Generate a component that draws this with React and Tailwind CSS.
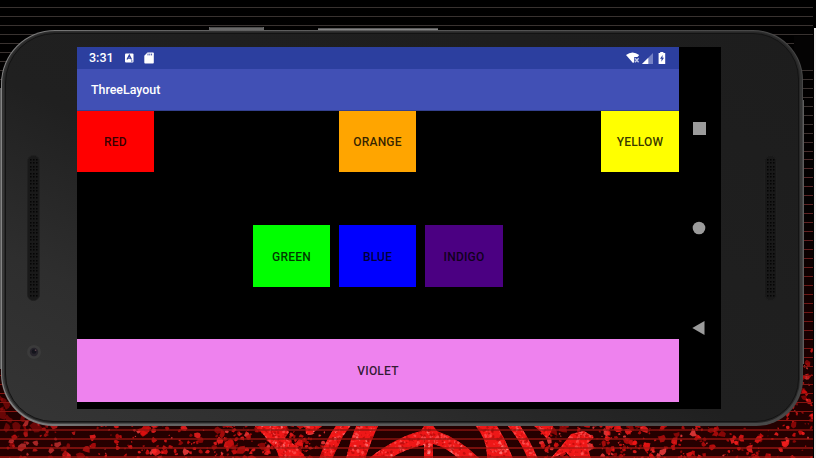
import React from "react";

// Small seeded generator so the wallpaper is the same on every load
function makeRandom(seed) {
  let s = seed;
  return () => {
    s = (s * 16807) % 2147483647;
    return s / 2147483647;
  };
}

const reds = ["#ff2020", "#e01010", "#c00c0c", "#f51818", "#9e0808", "#ff4040"];

function blob(x, y, r, rnd) {
  const pts = [];
  for (let i = 0; i < 7; i++) {
    const a = (i / 7) * Math.PI * 2;
    const d = r * (0.5 + rnd() * 0.8);
    pts.push(`${(x + Math.cos(a) * d).toFixed(1)},${(y + Math.sin(a) * d).toFixed(1)}`);
  }
  return pts.join(" ");
}

const rnd = makeRandom(4217);
const specks = [];
for (let i = 0; i < 620; i++) {
  let x = rnd() * 814;
  if (x > 325 && x < 545) x = rnd() > 0.5 ? 215 + rnd() * 100 : 540 + rnd() * 110;
  const y = 422 + rnd() * 38;
  const r = 0.7 + rnd() * rnd() * 4.8;
  const c = reds[Math.floor(rnd() * reds.length)];
  specks.push({ p: blob(x, y, r, rnd), c, o: x < 90 ? 0.6 : 0.8 });
}
for (let i = 0; i < 24; i++) {
  const x = rnd() * 48;
  const y = 385 + rnd() * 45;
  specks.push({ p: blob(x, y, 2 + rnd() * 5, rnd), c: "#b00c0c", o: 0.5 });
}
for (let i = 0; i < 60; i++) {
  const x = 785 + rnd() * 28;
  const y = 350 + rnd() * 78;
  specks.push({ p: blob(x, y, 0.7 + rnd() * 2.6, rnd), c: reds[i % 6], o: 0.7 });
}
const grain = [];
for (let i = 0; i < 2000; i++) {
  const t = rnd();
  grain.push({
    p: blob(240 + rnd() * 355, 423 + rnd() * 36, 0.5 + rnd() * 1.4, rnd),
    c: t > 0.62 ? "#b00a0a" : t > 0.3 ? "#ff5555" : t > 0.24 ? "#ff9090" : "#ff1c1c",
  });
}
const lines = Array.from({ length: 51 }, (_, k) => 7 + k * 8.97);

function Wallpaper() {
  return (
    <svg className="absolute inset-0" width="816" height="458" viewBox="0 0 816 458" aria-hidden="true">
      <defs>
        <linearGradient id="bg" x1="0" y1="0" x2="0" y2="1">
          <stop offset="0" stopColor="#000" />
          <stop offset="0.45" stopColor="#030000" />
          <stop offset="0.8" stopColor="#1c0000" />
          <stop offset="1" stopColor="#280000" />
        </linearGradient>
        <linearGradient id="rule" gradientUnits="userSpaceOnUse" x1="0" y1="0" x2="0" y2="458">
          <stop offset="0" stopColor="#383230" />
          <stop offset="0.28" stopColor="#3b3230" />
          <stop offset="0.4" stopColor="#572526" />
          <stop offset="0.7" stopColor="#711411" />
          <stop offset="0.93" stopColor="#8c1410" />
          <stop offset="1" stopColor="#b01a14" />
        </linearGradient>
        <clipPath id="rings">
          <path d="M337 424H352L343 436 332 459H319Q324 443 337 424Z" />
          <path d="M357 424H379Q372 438 365 459H346Q350 440 357 424Z" />
          <path d="M368 459Q396 437 421 431L425 424H432L437 431Q460 439 480 459H459Q446 447 433 444V459H424V445Q404 449 390 459Z" />
          <path d="M474 424H496Q506 440 513 459H487Q488 439 474 424Z" />
          <path d="M506 424H519Q530 440 538 459H528Q519 438 506 424Z" />
          <path d="M532 424H554L551 432 547 439 541 432Z" />
          <path d="M550 459 560 448 571 434 584 431 594 437 587 444 591 459H572L566 452Z" />
          <path d="M253 424H281L289 432 285 438 296 446 307 459H280L276 449 270 443 263 434Z" />
          <path d="M305 424H325L314 432 306 434Z" />
        </clipPath>
      </defs>
      <rect width="816" height="458" fill="url(#bg)" />
      {specks.map((s, i) => <polygon key={i} points={s.p} fill={s.c} opacity={s.o} />)}
      <g clipPath="url(#rings)">
        <rect x="225" y="420" width="370" height="40" fill="#ee1717" />
        {grain.map((s, i) => <polygon key={i} points={s.p} fill={s.c} opacity="0.7" />)}
      </g>
      {lines.map((y) => (
        <rect key={y} x="0" y={Math.round(y)} width="813" height={y > 425 ? 2 : 1} fill="url(#rule)" opacity={y > 425 ? 0.65 : 1} />
      ))}
      <rect x="794" y="36" width="19" height="34" fill="#040303" />
      <rect x="813" y="28" width="1" height="430" fill="#000" />
      <rect x="814" y="28" width="2" height="430" fill="#f2f2f2" />
      <rect x="209" y="27" width="55" height="4" fill="#686868" />
      <rect x="210" y="27" width="53" height="1" fill="#4c4c4c" />
      <rect x="318" y="28" width="120" height="3" fill="#858585" />
      <rect x="318" y="28" width="120" height="1" fill="#5a5a5a" />
      <rect x="0" y="88" width="3" height="281" fill="#5e5e5e" />
      <rect x="803" y="100" width="1" height="264" fill="#5e5e5e" />
    </svg>
  );
}

function Speaker() {
  return (
    <svg width="13" height="146" viewBox="0 0 13 146" aria-hidden="true">
      <rect x="0.5" y="0.5" width="12" height="145" rx="6" fill="#191919" stroke="#202020" />
      {Array.from({ length: 40 }, (_, r) =>
        [3, 6, 9].map((x) => <rect key={`${r}-${x}`} x={x} y={Math.round(4 + r * 3.48)} width="1.5" height="1.5" fill="#050505" />)
      )}
    </svg>
  );
}

function StatusBar() {
  return (
    <div className="flex h-[22px] items-center bg-[#2c3f9f] pl-3 pr-[13px] text-white">
      <span className="w-[36px] pt-px text-[12.5px] leading-none font-medium">3:31</span>
      <svg width="9" height="10" viewBox="0 0 9 10">
        <rect y="0.5" width="8.5" height="9" rx="1" fill="#fff" />
        <path d="M2 6.5 4.3 2 6.5 6.5M3 5.2H5.6M6 8H7.5" stroke="#2c3f9f" strokeWidth="1.2" fill="none" />
      </svg>
      <svg className="ml-[10px]" width="10" height="12" viewBox="0 0 10 12">
        <path d="M3.5 0.5H9Q9.8 0.5 9.8 1.3V10.5Q9.8 11.4 9 11.4H1.2Q0.3 11.4 0.3 10.5V3.8Z" fill="#fff" />
        <path d="M4 1.6V3.4M5.8 1.6V3.4M7.6 1.6V3.4" stroke="#2c3f9f" strokeWidth="0.9" />
      </svg>
      <svg className="ml-auto" width="14" height="12" viewBox="0 0 14 12">
        <path d="M0 3Q6.5 -2 13.2 3L11.5 5H8.2V10.2L7 11Z" fill="#fff" />
        <path d="M9 6.2 12.6 10.2M12.6 6.2 9 10.2" stroke="#c3cae9" strokeWidth="1.3" />
      </svg>
      <svg className="ml-0.5" width="11" height="11" viewBox="0 0 11 11">
        <path d="M0 11 11 0V11Z" fill="#7582c5" />
        <path d="M0 11 6.3 4.7V11Z" fill="#fff" />
      </svg>
      <svg className="ml-[5px]" width="8" height="12" viewBox="0 0 8 12">
        <path d="M2.2 0H5.4V1.1H7.2V12H0.6V1.1H2.2Z" fill="#fff" />
        <path d="M4.7 3 2 6.8H3.6L3.3 9.8 6 5.8H4.4Z" fill="#2c3f9f" />
      </svg>
    </div>
  );
}

function Tile({ label, color }) {
  return (
    <div className={`flex items-center justify-center pt-px text-[12px] leading-none font-medium tracking-[0.2px] text-black/80 ${color}`}>
      {label}
    </div>
  );
}

function Screen() {
  return (
    <div className="flex h-[362px] w-[644px] bg-black">
      <div className="flex w-[602px] flex-col">
        <StatusBar />
        <div className="flex h-[42px] items-center border-b border-[#34418f] bg-[#4150b5] pt-0.5 pl-[14px] text-[12.4px] font-medium text-white">
          ThreeLayout
        </div>
        <div className="grid h-[61px] grid-cols-[77px_77px_78px] justify-between">
          <Tile label="RED" color="bg-[#ff0000]" />
          <Tile label="ORANGE" color="bg-[#ffa500]" />
          <Tile label="YELLOW" color="bg-[#ffff00]" />
        </div>
        <div className="mt-[53px] grid h-[62px] grid-cols-[77px_77px_78px] justify-center gap-[9px]">
          <Tile label="GREEN" color="bg-[#00ff00]" />
          <Tile label="BLUE" color="bg-[#0000ff]" />
          <Tile label="INDIGO" color="bg-[#4b0082]" />
        </div>
        <div className="mt-[52px] grid h-[63px]">
          <Tile label="VIOLET" color="bg-[#ee82ee]" />
        </div>
      </div>
      <div className="flex flex-1 flex-col items-center pt-[75px]">
        <svg width="14" height="214" viewBox="0 0 14 214" className="-ml-0.5">
          <rect x="1" y="0" width="13" height="13" fill="#9b9b9b" />
          <circle cx="7" cy="106" r="6.3" fill="#9b9b9b" />
          <path d="M0.3 206 12.5 199V213Z" fill="#9b9b9b" />
        </svg>
      </div>
    </div>
  );
}

export default function App() {
  return (
    <div className="relative h-[458px] w-[816px] overflow-hidden bg-black font-['Roboto','Liberation_Sans',sans-serif]">
      <Wallpaper />
      <div className="relative pt-[30px] pl-px">
        <div className="h-[396px] w-[802px] rounded-tl-[54px] rounded-tr-[50px] rounded-br-[47px] rounded-bl-[52px] bg-[linear-gradient(90deg,#858585_0%,#666666_15%,#555555_60%,#464646_100%)] pt-px pr-px pb-0.5 pl-px">
          <div className="h-full rounded-tl-[53px] rounded-tr-[49px] rounded-br-[45px] rounded-bl-[51px] bg-[linear-gradient(180deg,#303030_0%,#3a3a3a_80%,#484848_100%)] pr-[2px] pb-px pl-[2px] pt-px">
            <div className="h-full rounded-tl-[51px] rounded-tr-[47px] rounded-br-[44px] rounded-bl-[49px] bg-[#272727] p-px">
              <div className="flex h-full rounded-tl-[50px] rounded-tr-[46px] rounded-br-[43px] rounded-bl-[48px] border border-[#131313] bg-[linear-gradient(25deg,#353535_0%,#2e2e2e_22%,#202020_45%,#1d1d1d_100%)] pt-[13px]">
                <div className="flex w-[71px] flex-col pt-[108px] pl-[21px]">
                  <Speaker />
                  <svg className="mt-[44px]" width="14" height="14" viewBox="0 0 14 14">
                    <circle cx="7" cy="7" r="7" fill="#3b3b3b" />
                    <circle cx="7" cy="7" r="4.2" fill="#26232b" />
                    <circle cx="7" cy="6.5" r="2.3" fill="#14141c" />
                    <circle cx="8.5" cy="5.3" r="0.8" fill="#644953" />
                  </svg>
                </div>
                <Screen />
                <div className="flex flex-1 pt-[108px] pl-[43px]">
                  <Speaker />
                </div>
              </div>
            </div>
          </div>
        </div>
      </div>
    </div>
  );
}
